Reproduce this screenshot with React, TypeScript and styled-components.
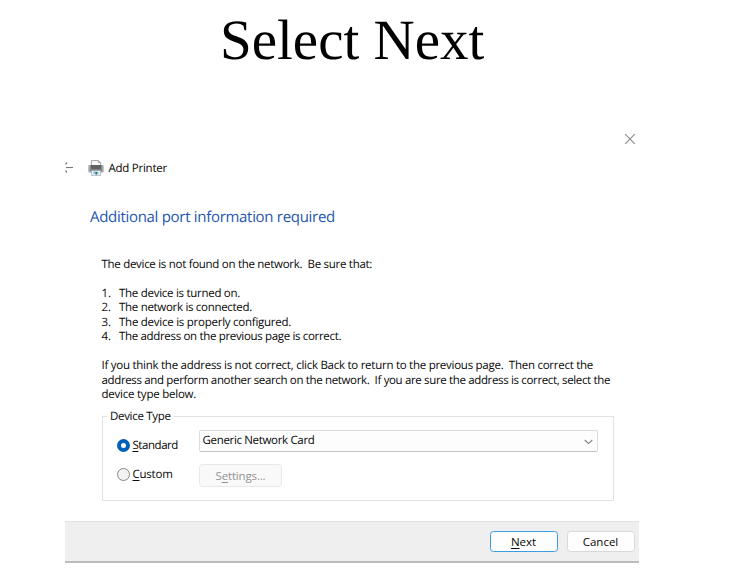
import React from 'react';
import styled, { createGlobalStyle } from 'styled-components';

const GlobalStyle = createGlobalStyle`
  * { box-sizing: border-box; }
  body { margin: 0; background: #fff; overflow: hidden; }
`;

const Slide = styled.main`
  width: 755px;
  height: 586px;
  background: #fff;
  color: #080808;
  font: 11.5px/14.5px "Open Sans", "Noto Sans", sans-serif;
  text-rendering: geometricPrecision;
`;

const SlideTitle = styled.h1`
  margin: 0;
  height: 78px;
  padding-left: 220px;
  color: #000;
  font: 400 57px/81px "Liberation Serif", serif;
  white-space: nowrap;
`;

const Dialog = styled.section`
  display: flex;
  flex-direction: column;
  width: 574px;
  height: 485px;
  margin-left: 65px;
`;

const Text = styled.span<{ $track?: number }>`
  display: block;
  white-space: pre;
  letter-spacing: ${({ $track = 0 }) => $track}px;
`;

const CloseBar = styled.div`
  display: flex;
  justify-content: flex-end;
  height: 80px;
  padding: 55px 3px 0 0;
`;

const TitleBar = styled.header`
  display: flex;
  align-items: center;
  height: 20px;
`;

const BackIcon = styled.svg`
  width: 9px;
  height: 12px;
  margin-right: 14px;
`;

const PrinterIcon = styled.svg`
  width: 16px;
  height: 16px;
  margin-right: 4.5px;
`;

const AppName = styled(Text)`
  padding-top: 2px;
`;

const Heading = styled.h2`
  margin: 27px 0 0 25px;
  color: #2456b0;
  font-size: 15px;
  font-weight: 400;
  line-height: 24px;
`;

const Body = styled.div`
  display: flex;
  flex-direction: column;
  margin: 28.5px 25px 0 36.5px;
`;

const List = styled.ol`
  margin: 14.5px 0;
  padding: 0;
  list-style: none;
`;

const Item = styled.li`
  display: grid;
  grid-template-columns: 17.5px 1fr;
`;

const Group = styled.fieldset`
  display: grid;
  grid-template-columns: 81.5px 399px;
  column-gap: 0;
  align-content: start;
  height: 91px;
  min-width: 0;
  width: 512px;
  margin: 7px 0 0;
  padding: 6px 0 0 14.5px;
  border: 1px solid #e2e2e2;
`;

const Legend = styled.legend`
  margin-left: -10px;
  padding: 0 3px;
`;

const RadioLabel = styled.label<{ $drop: number }>`
  display: flex;
  align-items: center;
  gap: 2.5px;
  height: 14.5px;
  margin-top: ${({ $drop }) => $drop}px;
`;

const Radio = styled.span<{ $checked?: boolean }>`
  width: 13px;
  height: 13px;
  border: ${({ $checked }) => ($checked ? '4px solid #0560b8' : '1px solid #858585')};
  border-radius: 50%;
  background: ${({ $checked }) => ($checked ? '#fff' : '#f3f3f3')};
`;

const Select = styled.div`
  display: flex;
  align-items: center;
  justify-content: space-between;
  height: 22px;
  padding: 1px 4px 0 3px;
  border: 1px solid #dcdcdc;
  border-bottom-color: #c3c3c3;
  border-radius: 2px;
  background: #fdfdfd;
`;

const Button = styled.button<{ $kind?: 'primary' | 'disabled' }>`
  display: flex;
  align-items: center;
  justify-content: center;
  width: 68px;
  height: 21px;
  padding: 1px 0 0;
  border: 1px solid ${({ $kind }) => ($kind === 'primary' ? '#3f9be0' : '#d9d9d9')};
  border-radius: 3.5px;
  background: #fefefe;
  color: #080808;
  font: inherit;
`;

const SettingsButton = styled(Button)`
  width: 83px;
  height: 23px;
  margin: 11px 0 0 0.5px;
  border-color: #e9e9e9;
  background: #f9f9f9;
  color: #929292;
`;

const Footer = styled.footer`
  display: flex;
  justify-content: flex-end;
  gap: 9px;
  height: 42px;
  margin-top: auto;
  padding: 9px 4.5px 0 0;
  border-top: 1px solid #e1e1e1;
  border-bottom: 2px solid #bcbcbc;
  background: #efefef;
`;

const Key = styled.u`
  text-decoration-thickness: 1px;
  text-underline-offset: 1.5px;
`;

const steps = [
  { text: 'The device is turned on.', track: -0.277 },
  { text: 'The network is connected.', track: -0.3 },
  { text: 'The device is properly configured.', track: -0.25 },
  { text: 'The address on the previous page is correct.', track: -0.33 },
];

const advice = [
  { text: 'If you think the address is not correct, click Back to return to the previous page.  Then correct the', track: -0.262 },
  { text: 'address and perform another search on the network.  If you are sure the address is correct, select the', track: -0.35 },
  { text: 'device type below.', track: -0.23 },
];

export default function App() {
  return (
    <>
      <GlobalStyle />
      <Slide>
        <SlideTitle>Select Next</SlideTitle>
        <Dialog>
          <CloseBar>
            <svg width="12" height="12" viewBox="0 0 12 12">
              <path d="M1.2 1.2 10.8 10.8M10.8 1.2 1.2 10.8" stroke="#8a8a8a" strokeWidth="1.1" />
            </svg>
          </CloseBar>
          <TitleBar>
            <BackIcon viewBox="0 0 9 12">
              <path d="M1 5.5h7" stroke="#777" strokeWidth="1.1" />
              <path d="M1.9.6.5 2.4M.5 8.6l1.4 1.8" stroke="#666" strokeWidth="1.1" />
            </BackIcon>
            <PrinterIcon viewBox="0 0 16 16">
              <path d="M3.4 6V.6h7.2l2 2V6" fill="#fafafa" stroke="#999" strokeWidth=".9" />
              <path d="M10.4.6v2.1h2.2" fill="none" stroke="#999" strokeWidth=".8" />
              <rect x=".3" y="5" width="15.4" height="7.6" rx="1" fill="#a9abad" />
              <rect x="2.6" y="5" width="10.8" height="4.4" fill="#606163" />
              <rect x="1.6" y="9.4" width="12.8" height="1.4" fill="#7b7d7f" />
              <path d="M3.4 10.6h9.2v4.8H3.4z" fill="#f0f7fa" stroke="#9a9fa2" strokeWidth=".7" />
              <rect x="5.4" y="11.6" width="2" height="2.2" fill="#6fb9dc" />
              <rect x="7.4" y="11.8" width="1.8" height="2.8" fill="#2c6fa8" />
              <rect x="9.2" y="12" width="1.2" height="1.8" fill="#59b78d" />
            </PrinterIcon>
            <AppName $track={-0.25}>Add Printer</AppName>
          </TitleBar>
          <Heading><Text $track={-0.3}>Additional port information required</Text></Heading>
          <Body>
            <Text $track={-0.29}>{'The device is not found on the network.  Be sure that:'}</Text>
            <List>
              {steps.map((step, i) => (
                <Item key={step.text}>
                  <Text>{i + 1}.</Text>
                  <Text $track={step.track}>{step.text}</Text>
                </Item>
              ))}
            </List>
            {advice.map((line) => (
              <Text key={line.text} $track={line.track}>{line.text}</Text>
            ))}
            <Group>
              <Legend><Text $track={-0.31}>Device Type</Text></Legend>
              <RadioLabel $drop={8.5}>
                <Radio $checked />
                <Text $track={-0.45}><Key>S</Key>tandard</Text>
              </RadioLabel>
              <Select>
                <Text $track={-0.33}>Generic Network Card</Text>
                <svg width="9" height="6" viewBox="0 0 9 6">
                  <path d="M.7 1 4.5 4.6 8.3 1" fill="none" stroke="#808080" strokeWidth="1.1" />
                </svg>
              </Select>
              <RadioLabel $drop={14.5}>
                <Radio />
                <Text $track={-0.23}><Key>C</Key>ustom</Text>
              </RadioLabel>
              <SettingsButton $kind="disabled" disabled>
                <Text $track={-0.16}>S<Key>e</Key>ttings...</Text>
              </SettingsButton>
            </Group>
          </Body>
          <Footer>
            <Button $kind="primary"><Text><Key>N</Key>ext</Text></Button>
            <Button><Text>Cancel</Text></Button>
          </Footer>
        </Dialog>
      </Slide>
    </>
  );
}
